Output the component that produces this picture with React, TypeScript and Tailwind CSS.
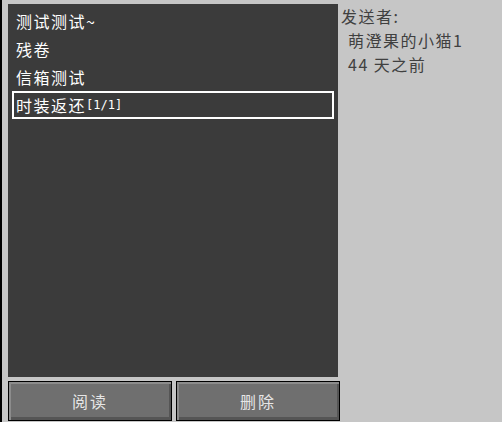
import { useState } from 'react';

const mails = [
  { title: '测试测试~' },
  { title: '残卷' },
  { title: '信箱测试' },
  { title: '时装返还', count: '[1/1]' },
];

const font = { fontFamily: '"Noto Sans CJK SC", "DejaVu Sans", sans-serif' };

const MailButton = ({ label }: { label: string }) => (
  <button className="flex h-[40px] w-[164px] items-center justify-center border border-black bg-[#6f6f6f] shadow-[inset_2px_2px_0_#8c8c8c,inset_-2px_-3px_0_#555555] text-[16px] tracking-[2px] text-[#e6e6e6]">
    {label}
  </button>
);

export default function App() {
  const [selected, setSelected] = useState(3);

  return (
    <div className="flex h-[422px] w-[502px] border-l-2 border-black bg-[#c6c6c6] pl-[6px] pt-[4px]" style={font}>
      <div className="flex w-[332px] flex-col gap-[4px]">
        <div className="flex h-[373px] w-[330px] flex-col bg-[#3b3b3b] px-[4px] pt-[3px]">
          {mails.map((m, i) => (
            <div
              key={m.title}
              onClick={() => setSelected(i)}
              className={`flex h-[28px] items-center border-2 pl-[2px] text-[16px] leading-none tracking-[1.5px] text-white ${
                i === selected ? 'border-white' : 'border-transparent'
              }`}
            >
              {m.title}
              {m.count && (
                <span className="text-[12px] tracking-normal" style={{ fontFamily: '"DejaVu Sans Mono", monospace' }}>
                  {m.count}
                </span>
              )}
            </div>
          ))}
        </div>
        <div className="flex gap-[4px]">
          <MailButton label="阅读" />
          <MailButton label="删除" />
        </div>
      </div>
      <div className="flex flex-col pl-[1px] text-[16px] leading-[24px] tracking-[1.5px] text-[#404040]">
        <div>发送者:</div>
        <div className="pl-[7px]">萌澄果的小猫1</div>
        <div className="pl-[7px]">44 天之前</div>
      </div>
    </div>
  );
}
